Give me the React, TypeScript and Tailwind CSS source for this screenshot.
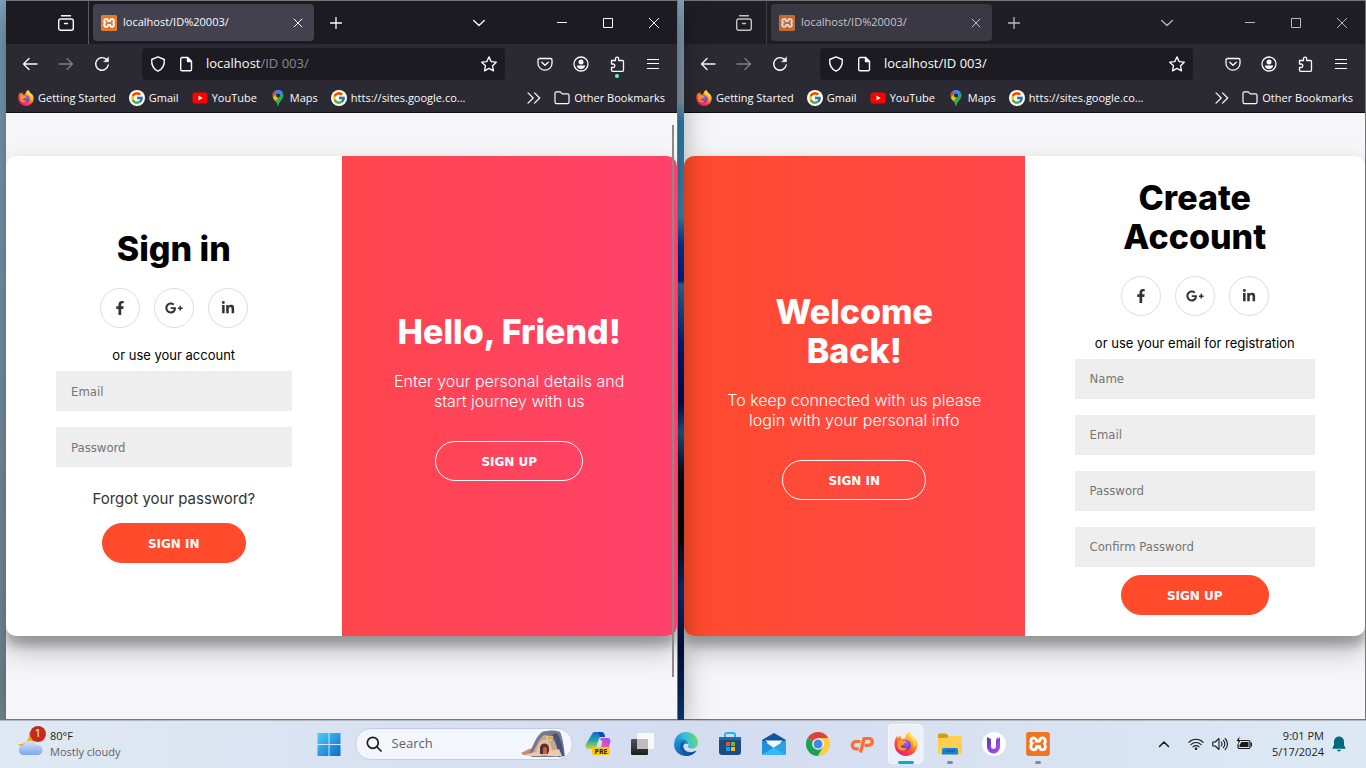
import type { ReactNode } from 'react'
import clsx from 'clsx'
import { FaFacebookF, FaGooglePlusG, FaLinkedinIn } from 'react-icons/fa'
import { FcGoogle } from 'react-icons/fc'
import { SiXampp } from 'react-icons/si'

type IconProps = { className?: string }

const line = { fill: 'none', stroke: 'currentColor', strokeLinecap: 'round', strokeLinejoin: 'round' } as const

function FirefoxIcon({ className }: IconProps) {
  return (
    <svg viewBox="0 0 24 24" className={className}>
      <defs>
        <linearGradient id="fx-body" x1="0.85" y1="0.05" x2="0.25" y2="1">
          <stop offset="0" stopColor="#fff04a" />
          <stop offset="0.35" stopColor="#ffa824" />
          <stop offset="0.65" stopColor="#ff4a3d" />
          <stop offset="1" stopColor="#e3157c" />
        </linearGradient>
        <radialGradient id="fx-globe" cx="0.55" cy="0.3" r="0.7">
          <stop offset="0" stopColor="#b25bf5" />
          <stop offset="1" stopColor="#5237b8" />
        </radialGradient>
      </defs>
      <path fill="url(#fx-body)" d="M22.6 8.7c-.6-1.4-1.7-2.8-2.6-3.3.5 1 .9 2 1 3-1.3-3.3-3.6-4.6-5.4-7.5L14.9 0c-2.7 1.6-3.7 4.5-3.8 6.2-1.1.1-2.1.5-3 1.1L7 6.6c-.3-1-.3-2.1 0-3.1-1.3.6-2.3 1.6-3 2.4-.6-.5-.5-2.1-.4-2.5C1.500 5.300.4 8.800.5 12.500.7 18.800 5.700 24 12 24c6.100 0 11-4.500 11.500-10.400.1-1.700-.2-3.300-.9-4.900z" />
      <circle cx="11.8" cy="13" r="5.3" fill="url(#fx-globe)" />
      <path fill="#ff9a2b" d="M4 8.200c1.800-.8 4-.6 5.300.7 1.300-.2 2.600 0 3.500.4-.2 1.200-1.600 1.500-2.600 2.100-.5.4-.3 1.200-.9 1.700-.8.6-1.900.2-2.700.8.8 2.400 4.600 2.800 6.800 1.500-1 2.700-4.900 3.900-7.600 2.300C3.200 16 2.800 11.500 4 8.200z" />
      <path fill="#ffe04a" d="M14.900 0c-1 3 .6 5.200 2.800 7.200 2.300 2.200 3 5.300 1.700 8.300 2.300-1.500 2.800-4.500 1.600-7.100-1.300-3.300-3.600-4.600-5.400-7.500z" />
    </svg>
  )
}

function XamppIcon({ className }: IconProps) {
  return (
    <span className={clsx('flex items-center justify-center rounded-[3px] bg-white', className)}>
      <SiXampp className="size-full text-[#ee7623]" />
    </span>
  )
}

function GoogleBadge() {
  return (
    <span className="flex size-4 items-center justify-center rounded-full bg-white">
      <FcGoogle className="size-3.5" />
    </span>
  )
}

function YouTubeIcon() {
  return (
    <svg viewBox="0 0 16 16" className="size-4">
      <rect x="0.5" y="2.5" width="15" height="11" rx="2.5" fill="#f00" />
      <path d="M6.500 5.600v4.800L10.600 8z" fill="#fff" />
    </svg>
  )
}

function MapsIcon() {
  return (
    <svg viewBox="0 0 16 16" className="size-4">
      <defs>
        <clipPath id="pin">
          <path d="M8 0a5.500 5.500 0 0 0-5.500 5.500c0 2 .9 3.200 2.200 4.800C6.200 12.200 7 13.500 7.500 15.500c.2.700.8.700 1 0 .5-2 1.300-3.300 2.800-5.200 1.300-1.600 2.200-2.800 2.200-4.800A5.500 5.500 0 0 0 8 0z" />
        </clipPath>
      </defs>
      <g clipPath="url(#pin)">
        <rect width="16" height="16" fill="#34a853" />
        <path d="M0 0h8L3 7 0 5z" fill="#ea4335" />
        <path d="M6 0h10v2L8 6z" fill="#1a73e8" />
        <path d="M1 10l7-8v6l-4 5z" fill="#fbbc04" />
        <path d="M6 0h8L10 6 6 5z" fill="#4285f4" />
      </g>
      <circle cx="8" cy="5.5" r="2" fill="#2b2a33" />
    </svg>
  )
}

function ChromeButton({ label, className, children }: { label: string; className?: string; children: ReactNode }) {
  return (
    <button type="button" aria-label={label} className={clsx('flex h-8 w-9 shrink-0 items-center justify-center', className)}>
      {children}
    </button>
  )
}

function TitleBar({ active }: { active: boolean }) {
  return (
    <div className={clsx('flex h-[43px] items-stretch text-[#fbfbfe]', active ? 'bg-[#1c1b22]' : 'bg-[#1f1e25]')}>
      <div className={clsx('flex w-[83px] shrink-0 justify-end border-r', active ? 'border-[#5b5a62]' : 'border-[#4a4951] opacity-75')}>
        <button type="button" aria-label="Firefox View" className="flex w-11 items-center justify-center">
          <svg viewBox="0 0 16 16" className="size-4" {...line} strokeWidth="1.4">
            <path d="M3.500 0.800h9M2.700 4h10.600a2 2 0 0 1 2 2v7.300a2 2 0 0 1-2 2H2.700a2 2 0 0 1-2-2V6a2 2 0 0 1 2-2zM6.500 8.500h3" />
          </svg>
        </button>
      </div>
      <div className={clsx('my-[3px] ml-1 flex w-[221px] items-center gap-1.5 rounded-sm px-2', active ? 'bg-[#42414d]' : 'bg-[#393843]')}>
        <XamppIcon className={clsx('size-4', !active && 'opacity-80')} />
        <span className={clsx('flex-1 text-[11px]', !active && 'text-[#c5c5ca]')}>localhost/ID%20003/</span>
        <button type="button" aria-label="Close tab" className={clsx('flex size-4 items-center justify-center', !active && 'opacity-70')}>
          <svg viewBox="0 0 10 10" className="size-2.5" {...line} strokeWidth="1">
            <path d="M1 1l8 8M9 1L1 9" />
          </svg>
        </button>
      </div>
      <div className={clsx('flex flex-1 items-center', !active && 'opacity-70')}>
        <button type="button" aria-label="New tab" className="flex h-8 w-11 items-center justify-center">
          <svg viewBox="0 0 12 12" className="size-3" {...line} strokeWidth="1.3">
            <path d="M6 0.500v11M0.500 6h11" />
          </svg>
        </button>
        <button type="button" aria-label="List all tabs" className="mr-[42px] ml-auto flex h-8 w-9 items-center justify-center">
          <svg viewBox="0 0 12 12" className="size-3" {...line} strokeWidth="1.3">
            <path d="M0.700 3.500L6 8.500l5.300-5" />
          </svg>
        </button>
        <button type="button" aria-label="Minimize" className="flex h-full w-[46px] items-center justify-center">
          <svg viewBox="0 0 10 10" className="size-2.5" fill="none" stroke="currentColor">
            <path d="M0 4.500h10" />
          </svg>
        </button>
        <button type="button" aria-label="Maximize" className="flex h-full w-[46px] items-center justify-center">
          <svg viewBox="0 0 10 10" className="size-2.5" fill="none" stroke="currentColor">
            <path d="M0.500 0.500h9v9h-9z" />
          </svg>
        </button>
        <button type="button" aria-label="Close" className="flex h-full w-[46px] items-center justify-center">
          <svg viewBox="0 0 10 10" className="size-2.5" fill="none" stroke="currentColor">
            <path d="M0 0l10 10M10 0L0 10" />
          </svg>
        </button>
      </div>
    </div>
  )
}

function Toolbar({ active }: { active: boolean }) {
  return (
    <div className="flex h-10 items-center bg-[#2b2a33] px-1.5 text-[#fbfbfe]">
      <ChromeButton label="Back">
        <svg viewBox="0 0 16 16" className="size-4" {...line} strokeWidth="1.3">
          <path d="M15 8H1.500M7 2.500L1.500 8 7 13.500" />
        </svg>
      </ChromeButton>
      <ChromeButton label="Forward" className="opacity-40">
        <svg viewBox="0 0 16 16" className="size-4" {...line} strokeWidth="1.3">
          <path d="M1 8h13.500M9 2.500L14.500 8 9 13.500" />
        </svg>
      </ChromeButton>
      <ChromeButton label="Reload">
        <svg viewBox="0 0 16 16" className="size-4" {...line} strokeWidth="1.4">
          <path d="M14.200 9A6.300 6.300 0 1 1 12.600 3.600" />
          <path d="M14.500 1.200v4.600H9.900z" fill="currentColor" strokeWidth="0.5" />
        </svg>
      </ChromeButton>
      <div className="mx-[22px] flex h-8 flex-1 items-center gap-3 rounded bg-[#1c1b22] px-2">
        <svg viewBox="0 0 16 16" className="size-4 shrink-0" {...line} strokeWidth="1.4">
          <path d="M8 0.800l6.300 2.700c.4 5.600-1.700 9.600-6.300 11.700-4.600-2.100-6.700-6.100-6.300-11.700z" />
        </svg>
        <svg viewBox="0 0 16 16" className="size-4 shrink-0" {...line} strokeWidth="1.4">
          <path d="M4 1.500h5.500l4 4v8a1.300 1.300 0 0 1-1.300 1.300H4a1.300 1.300 0 0 1-1.300-1.300V2.800A1.300 1.300 0 0 1 4 1.500z" />
          <path d="M9.500 1.500v4h4z" fill="currentColor" />
        </svg>
        <div className="flex-1 text-[13px]">
          localhost<span className={active ? 'text-[#8a8992]' : undefined}>/ID 003/</span>
        </div>
        <button type="button" aria-label="Bookmark this page">
          <svg viewBox="0 0 16 16" className="size-4" {...line} strokeWidth="1.3">
            <path d="M8 0.900l2.200 4.700 5.100.6-3.800 3.500 1 5.200L8 12.400l-4.500 2.500 1-5.200L.7 6.200l5.100-.6z" />
          </svg>
        </button>
      </div>
      <ChromeButton label="Save to Pocket">
        <svg viewBox="0 0 16 16" className="size-4" {...line} strokeWidth="1.3">
          <path d="M2.500 2.500h11a1.500 1.500 0 0 1 1.500 1.500v3.200a7 7 0 0 1-14 0V4a1.500 1.500 0 0 1 1.500-1.500zM4.800 6.200L8 9.300l3.200-3.100" />
        </svg>
      </ChromeButton>
      <ChromeButton label="Account">
        <svg viewBox="0 0 16 16" className="size-4">
          <circle cx="8" cy="8" r="7" fill="none" stroke="currentColor" strokeWidth="1.3" />
          <circle cx="8" cy="5.9" r="2.5" fill="currentColor" />
          <path d="M3.800 9.500h8.400c-.3 2.300-2 3.600-4.200 3.600s-3.900-1.300-4.200-3.600z" fill="currentColor" />
        </svg>
      </ChromeButton>
      <ChromeButton label="Extensions" className="relative">
        <svg viewBox="0 0 16 16" className="size-4" {...line} strokeWidth="1.3">
          <path d="M2.500 7V4.500h4V2.700a1.600 1.600 0 0 1 3.200 0v1.800h3.800a1 1 0 0 1 1 1v8.800a1 1 0 0 1-1 1H3.500a1 1 0 0 1-1-1v-2.800h1.600a1.700 1.700 0 0 0 0-3.500H2.500z" />
        </svg>
        {active && <span className="absolute bottom-0.5 left-4 size-1 rounded-full bg-[#54ffbd]" />}
      </ChromeButton>
      <ChromeButton label="Open menu">
        <svg viewBox="0 0 12 12" className="size-3" fill="none" stroke="currentColor">
          <path d="M0 1.500h12M0 5.500h12M0 10.500h12" />
        </svg>
      </ChromeButton>
    </div>
  )
}

const bookmarks = [
  { label: 'Getting Started', icon: <FirefoxIcon className="size-4" /> },
  { label: 'Gmail', icon: <GoogleBadge /> },
  { label: 'YouTube', icon: <YouTubeIcon /> },
  { label: 'Maps', icon: <MapsIcon /> },
  { label: 'htts://sites.google.co...', icon: <GoogleBadge /> },
]

function BookmarksBar() {
  return (
    <div className="flex h-[29px] items-center gap-[13px] border-b border-[#0c0c0d] bg-[#2b2a33] px-3 text-[11px] whitespace-nowrap text-[#fbfbfe]">
      {bookmarks.map(({ label, icon }) => (
        <a key={label} href="#" className="flex items-center gap-1">
          {icon}
          {label}
        </a>
      ))}
      <button type="button" aria-label="More bookmarks" className="ml-auto">
        <svg viewBox="0 0 14 12" className="h-3 w-3.5" {...line} strokeWidth="1.2">
          <path d="M1 0.800L6.200 6 1 11.200M7.500 0.800L12.700 6l-5.200 5.200" />
        </svg>
      </button>
      <button type="button" className="flex items-center gap-1">
        <svg viewBox="0 0 16 16" className="size-4" {...line} strokeWidth="1.2">
          <path d="M2.500 1.800h3.800l2 2h5.200a1.500 1.500 0 0 1 1.500 1.500v6.900a1.500 1.500 0 0 1-1.500 1.500h-11A1.500 1.500 0 0 1 1 12.200V3.300a1.500 1.500 0 0 1 1.500-1.500z" />
        </svg>
        Other Bookmarks
      </button>
    </div>
  )
}

const networks = [
  { label: 'Facebook', Icon: FaFacebookF, size: 'size-3.5' },
  { label: 'Google Plus', Icon: FaGooglePlusG, size: 'size-[18px]' },
  { label: 'LinkedIn', Icon: FaLinkedinIn, size: 'size-3.5' },
]

function SocialLinks() {
  return (
    <div className="my-5 flex gap-3.5">
      {networks.map(({ label, Icon, size }) => (
        <a key={label} href="#" aria-label={label} className="flex size-10 items-center justify-center rounded-full border border-[#dddddd] text-[#333]">
          <Icon className={size} />
        </a>
      ))}
    </div>
  )
}

function Field({ label, type = 'text' }: { label: string; type?: string }) {
  return (
    <input
      type={type}
      placeholder={label}
      aria-label={label}
      className="my-2 h-10 w-full bg-[#eee] px-[15px] font-['DejaVu_Sans_Condensed',sans-serif] text-[13px] placeholder:text-[#757575]"
    />
  )
}

function PillButton({ ghost, children }: { ghost?: boolean; children: ReactNode }) {
  return (
    <button
      type={ghost ? 'button' : 'submit'}
      className={clsx(
        "h-10 rounded-full border px-[45px] pt-0.5 font-['DejaVu_Sans',sans-serif] text-[12px] font-bold text-white",
        ghost ? 'border-white' : 'border-[#ff4b2b] bg-[#ff4b2b]',
      )}
    >
      {children}
    </button>
  )
}

function Heading({ children }: { children: ReactNode }) {
  return <h1 className="text-[34px] leading-[39px] font-extrabold">{children}</h1>
}

const cardClass =
  'grid min-h-[480px] w-full grid-cols-2 overflow-hidden rounded-[10px] bg-white text-center shadow-[0_14px_28px_rgba(0,0,0,0.25),0_10px_10px_rgba(0,0,0,0.22)]'

function SignInCard() {
  return (
    <div className={cardClass}>
      <form className="flex flex-col items-center justify-center px-[50px] text-black">
        <Heading>Sign in</Heading>
        <SocialLinks />
        <span className="text-[13px] leading-[15px]">or use your account</span>
        <Field label="Email" type="email" />
        <Field label="Password" type="password" />
        <a href="#" className="my-[15px] text-[15px] leading-[18px] text-[#333]">
          Forgot your password?
        </a>
        <PillButton>SIGN IN</PillButton>
      </form>
      <div className="flex flex-col items-center justify-center bg-linear-to-r from-[#ff464b] to-[#ff416c] px-10 text-white">
        <Heading>Hello, Friend!</Heading>
        <p className="mt-5 mb-[30px] text-[16px] leading-5 font-light">
          Enter your personal details and
          <br />
          start journey with us
        </p>
        <PillButton ghost>SIGN UP</PillButton>
      </div>
    </div>
  )
}

function SignUpCard() {
  return (
    <div className={cardClass}>
      <div className="flex flex-col items-center justify-center bg-linear-to-r from-[#ff4b2b] to-[#ff464b] px-10 text-white">
        <Heading>
          Welcome
          <br />
          Back!
        </Heading>
        <p className="mt-5 mb-[30px] text-[16px] leading-5 font-light">
          To keep connected with us please
          <br />
          login with your personal info
        </p>
        <PillButton ghost>SIGN IN</PillButton>
      </div>
      <form className="flex flex-col items-center justify-center px-[50px] text-black">
        <Heading>
          Create
          <br />
          Account
        </Heading>
        <SocialLinks />
        <span className="text-[13px] leading-[15px]">or use your email for registration</span>
        <Field label="Name" />
        <Field label="Email" type="email" />
        <Field label="Password" type="password" />
        <Field label="Confirm Password" type="password" />
        <PillButton>SIGN UP</PillButton>
      </form>
    </div>
  )
}

function BrowserWindow({ active = false, children }: { active?: boolean; children: ReactNode }) {
  return (
    <section
      className={clsx(
        "relative flex min-w-0 flex-col border-y border-r border-[#757575] font-['Open_Sans',sans-serif]",
        active && 'z-10 shadow-[0_8px_30px_rgba(0,0,0,0.45)]',
      )}
    >
      <TitleBar active={active} />
      <Toolbar active={active} />
      <BookmarksBar />
      <main className="relative flex flex-1 items-center overflow-hidden bg-[#f6f5f7] pb-10 font-['Inter',sans-serif]">
        {children}
        {active && <span className="absolute top-3 right-[3px] bottom-[42px] w-0.5 bg-[#8a8a8a]" />}
      </main>
    </section>
  )
}

function WeatherIcon() {
  return (
    <svg viewBox="0 0 26 24" className="h-6 w-[26px]">
      <defs>
        <linearGradient id="cloud" x1="0" y1="0" x2="0" y2="1">
          <stop offset="0" stopColor="#d7e5fb" />
          <stop offset="1" stopColor="#7ea6e8" />
        </linearGradient>
      </defs>
      <path d="M11 0c1 8-4 13-11 12 4 5 14 4 16-2 1-4-2-8-5-10z" fill="#f5a623" />
      <path d="M6 23a5 5 0 0 1-.5-10 7.500 7.500 0 0 1 13.500 0A5 5 0 0 1 20 23z" fill="url(#cloud)" />
    </svg>
  )
}

function StartIcon() {
  return (
    <svg viewBox="0 0 24 24" className="size-6">
      <defs>
        <linearGradient id="start" gradientUnits="userSpaceOnUse" x1="0" y1="0" x2="24" y2="24">
          <stop offset="0" stopColor="#4fd0fa" />
          <stop offset="1" stopColor="#0669cc" />
        </linearGradient>
      </defs>
      <path d="M0.500 1h11v11h-11zM12.500 1h11v11h-11zM0.500 13h11v11h-11zM12.500 13h11v11h-11z" fill="url(#start)" />
    </svg>
  )
}

function CaveArt() {
  return (
    <svg viewBox="0 0 46 28" className="h-7 w-[46px]">
      <path d="M1 23l8-4 5-1 3 7H3z" fill="#c98e6c" />
      <path d="M8 24c4-3 6-16 14-22 7-2 14-2 18 0 3 6 4 16 5 24l-12 1H12z" fill="#767892" />
      <path d="M11 24c4-2 6-14 13-19 6-1 11 5 13 13l1 8H12z" fill="#c9a58f" />
      <path d="M36 3c4 2 7 15 8 23l-6 1c0-9-2-17-6-22z" fill="#475077" />
      <path d="M16 25c0-9 4-15 9-15 4 0 7 6 8 15z" fill="#e2c3a2" />
      <path d="M20 24v-6a4.500 4.500 0 0 1 9 0v6z" fill="#592d3b" />
      <path d="M23 24v-5a2 2 0 0 1 4 0v5z" fill="#c5603a" />
      <path d="M26 6h7l-1 5h-5z" fill="#f2d391" />
      <path d="M27 8h6M29 5v6M31 6v4" stroke="#b27d4b" strokeWidth="0.6" />
      <path d="M29 21l10-2 3 7H27zM7 24l9-2 6 4H5z" fill="#ebcab0" />
    </svg>
  )
}

function CopilotIcon() {
  return (
    <svg viewBox="0 0 26 26" className="size-[26px]">
      <defs>
        <linearGradient id="cp-a" x1="0" y1="0" x2="0" y2="1">
          <stop offset="0" stopColor="#1665dc" />
          <stop offset="0.5" stopColor="#21a7a4" />
          <stop offset="1" stopColor="#d7cf37" />
        </linearGradient>
        <linearGradient id="cp-b" x1="0.8" y1="0" x2="0.2" y2="1">
          <stop offset="0" stopColor="#a84df0" />
          <stop offset="0.6" stopColor="#f05a9b" />
          <stop offset="1" stopColor="#ff9a4f" />
        </linearGradient>
      </defs>
      <path d="M7 3c1-2 2-2 4-2h5c2 0 3 1 3.500 3l.5 2h-3c-2 0-3 1-3.500 3l-2 6c-.5 2-1.500 3-3.500 3H4c-3 0-4-2-3-5z" fill="url(#cp-a)" />
      <path d="M16 7h6c3 0 4 2 3 5l-2.500 9c-.6 2-1.500 3-3.500 3h-7c2 0 2.500-1 3-3l2-9c.5-2-.5-3-2-3z" fill="url(#cp-b)" />
      <path d="M13 1h3c2 0 3 1 3.500 3l.5 2h-5z" fill="#1547b8" />
      <rect x="7" y="16" width="18" height="8" rx="2" fill="#ffc800" />
      <text x="16" y="22.5" textAnchor="middle" fontSize="7" fontWeight="700" fontFamily="Open Sans" fill="#222">
        PRE
      </text>
    </svg>
  )
}

function TaskViewIcon() {
  return (
    <svg viewBox="0 0 24 24" className="size-6">
      <defs>
        <linearGradient id="tv" x1="0" y1="0" x2="0" y2="1">
          <stop offset="0" stopColor="#555" />
          <stop offset="1" stopColor="#1c1c1c" />
        </linearGradient>
      </defs>
      <rect x="1" y="7" width="17" height="16" rx="1" fill="url(#tv)" />
      <rect x="7" y="1" width="17" height="16" rx="1" fill="#f8f8f8" />
      <rect x="7" y="7" width="11" height="10" fill="#bdbdbd" />
    </svg>
  )
}

function EdgeIcon() {
  return (
    <svg viewBox="0 0 24 24" className="size-6">
      <defs>
        <linearGradient id="edge-top" x1="0" y1="0.5" x2="1" y2="0.3">
          <stop offset="0" stopColor="#1d8fdb" />
          <stop offset="0.5" stopColor="#35c1d8" />
          <stop offset="1" stopColor="#6be15e" />
        </linearGradient>
        <linearGradient id="edge-low" x1="0" y1="0" x2="0.8" y2="1">
          <stop offset="0" stopColor="#1f9ade" />
          <stop offset="1" stopColor="#0c4c96" />
        </linearGradient>
      </defs>
      <path d="M.2 11C.8 4.500 6 0 12 0c7 0 12 5 12 10.500 0 3.500-2.500 6-6 6-3 0-4.500-1.200-4-2.200 1.500-2.300.5-5.300-3-5.800C6.500 8 1.500 9 .2 11z" fill="url(#edge-top)" />
      <path d="M.1 12C.5 9 4.500 6.500 9 7.300c3.500.6 5.500 3 5.200 5.200-.7-1.700-4.200-1.500-5 1.500-.8 3.500 3 7.500 8.500 6.500 2-.4 3.500-1 4.800-1.900C20.500 22 17 24 12.500 24 5 24-.3 18.500.1 12z" fill="url(#edge-low)" />
      <path d="M8.500 9.500c-3.500 3-2.500 10 3.500 14 4 .8 8-.8 10.500-4.900-5 2.500-11 2-12.800-2.600-.8-2.200-.7-3.700.3-5.200z" fill="#104f9c" opacity="0.8" />
    </svg>
  )
}

function StoreIcon() {
  return (
    <svg viewBox="0 0 24 24" className="size-6">
      <path d="M7 7V3a2 2 0 0 1 2-2h6a2 2 0 0 1 2 2v4" fill="none" stroke="#28b3ee" strokeWidth="2" />
      <path d="M1 5h22v15a3 3 0 0 1-3 3H4a3 3 0 0 1-3-3z" fill="#1b4c83" />
      <path d="M1 5h22v3H1z" fill="#1c6db3" />
      <path d="M8 10h4v4H8z" fill="#f25022" />
      <path d="M13 10h4v4h-4z" fill="#7fba00" />
      <path d="M8 15h4v4H8z" fill="#00a4ef" />
      <path d="M13 15h4v4h-4z" fill="#ffb900" />
    </svg>
  )
}

function MailIcon() {
  return (
    <svg viewBox="0 0 24 24" className="size-6">
      <path d="M0 8l12-7 12 7v3H0z" fill="#10569e" />
      <path d="M3 8.500h18L12 17z" fill="#f2f7fc" />
      <path d="M0 8l12 8-12 7z" fill="#1a93dc" />
      <path d="M24 8L0 23h24z" fill="#36b9f2" />
      <path d="M24 8v15L12 15.500z" fill="#2aa3e6" />
    </svg>
  )
}

function GoogleChromeIcon() {
  return (
    <svg viewBox="0 0 24 24" className="size-6">
      <path d="M12 12L1.600 6A12 12 0 0 1 22.400 6z" fill="#db4437" />
      <path d="M12 12L1.600 6A12 12 0 0 0 12 24l5.200-9z" fill="#1fa055" />
      <path d="M12 6h10.400A12 12 0 0 1 12 24l5.200-9z" fill="#ffcd41" />
      <circle cx="12" cy="12" r="5.8" fill="#fff" />
      <circle cx="12" cy="12" r="4.5" fill="#4285f4" />
    </svg>
  )
}

function CpanelIcon() {
  return (
    <svg viewBox="0 0 24 24" className="size-6" fill="none" stroke="#ff6c2c" strokeWidth="3.2" strokeLinejoin="round">
      <path d="M10.500 9.500H6.300a3.700 3.700 0 0 0-.6 7.400h3" />
      <path d="M10.500 20.500L14 6.500h5a3.300 3.300 0 0 1 .8 6.500l-1.300.3h-4" />
    </svg>
  )
}

function ExplorerIcon() {
  return (
    <svg viewBox="0 0 24 24" className="size-6">
      <path d="M0 3a1.500 1.500 0 0 1 1.500-1.500H8L10.500 4v3H0z" fill="#d99b0b" />
      <path d="M0 6h9l2-2h11.500A1.500 1.500 0 0 1 24 5.500v15a2 2 0 0 1-2 2H2a2 2 0 0 1-2-2z" fill="#ffd04f" />
      <path d="M4 22.500V18a2 2 0 0 1 2-2h12a2 2 0 0 1 2 2v4.500z" fill="#1583d8" />
      <path d="M7 19h10" stroke="#0a5ca8" strokeWidth="1.2" />
    </svg>
  )
}

function UIcon() {
  return (
    <svg viewBox="0 0 24 24" className="size-6">
      <defs>
        <linearGradient id="u" x1="0" y1="0" x2="1" y2="1">
          <stop offset="0" stopColor="#4a3ce0" />
          <stop offset="1" stopColor="#c04bdc" />
        </linearGradient>
      </defs>
      <circle cx="12" cy="12" r="12" fill="#fff" />
      <path d="M5 5l4 2v7.500a2.500 2.500 0 0 0 5 0V8l1.500-3 .5 2 2-2v10a6.500 6.500 0 0 1-13 0z" fill="url(#u)" />
    </svg>
  )
}

const apps: { label: string; icon: ReactNode; state?: 'active' | 'open' }[] = [
  { label: 'Copilot', icon: <CopilotIcon /> },
  { label: 'Task View', icon: <TaskViewIcon /> },
  { label: 'Microsoft Edge', icon: <EdgeIcon /> },
  { label: 'Microsoft Store', icon: <StoreIcon /> },
  { label: 'Mail', icon: <MailIcon /> },
  { label: 'Google Chrome', icon: <GoogleChromeIcon /> },
  { label: 'cPanel', icon: <CpanelIcon /> },
  { label: 'Firefox', icon: <FirefoxIcon className="size-6" />, state: 'active' },
  { label: 'File Explorer', icon: <ExplorerIcon />, state: 'open' },
  { label: 'U', icon: <UIcon /> },
  { label: 'XAMPP', icon: <XamppIcon className="size-6" />, state: 'open' },
]

function Taskbar() {
  return (
    <footer className="relative z-20 grid h-12 grid-cols-[1fr_auto_1fr] items-center border-t border-[#b4b8c2] bg-linear-to-r from-[#dfe9f3] via-[#d4dcf0] to-[#dce9f4] pb-0.5 font-['Open_Sans',sans-serif] text-[11px] text-[#1b1b1b]">
      <button type="button" className="relative flex items-center gap-1.5 pl-[18px] text-left">
        <WeatherIcon />
        <span className="absolute -top-0.5 left-[30px] flex size-4 items-center justify-center rounded-full bg-[#c42b1c] text-white">1</span>
        <span className="leading-4">
          80°F
          <br />
          <span className="text-[#5c6168]">Mostly cloudy</span>
        </span>
      </button>
      <nav className="flex items-center">
        <button type="button" aria-label="Start" className="flex h-10 w-11 items-center justify-center">
          <StartIcon />
        </button>
        <label className="mr-[3px] ml-1 flex h-8 w-[218px] items-center gap-2.5 rounded-full border border-[#c3cde2] bg-[#f3f6fc] pr-1.5 pl-2.5">
          <svg viewBox="0 0 16 16" className="size-4 shrink-0" {...line} strokeWidth="1.7">
            <circle cx="6.8" cy="6.8" r="5.5" />
            <path d="M11 11l4 4" />
          </svg>
          <input type="text" placeholder="Search" aria-label="Search" className="w-0 flex-1 text-[13px] placeholder:text-[#5c6168]" />
          <CaveArt />
        </label>
        {apps.map(({ label, icon, state }) => (
          <button key={label} type="button" aria-label={label} className="relative flex h-10 w-11 items-center justify-center">
            {state === 'active' && (
              <>
                <span className="absolute inset-y-0.5 left-1 w-[37px] rounded border border-[#dfe3f0] bg-[#e9edf8]" />
                <span className="absolute inset-y-0 left-1 w-[34px] rounded border border-white/60 bg-[#ebeff9]" />
                <span className="absolute bottom-0 left-3.5 h-[3px] w-4 rounded-full bg-[#00b3c4]" />
              </>
            )}
            {state === 'open' && <span className="absolute bottom-0 left-[19px] h-[3px] w-1.5 rounded-full bg-[#858993]" />}
            <span className="relative">{icon}</span>
          </button>
        ))}
      </nav>
      <div className="flex items-center justify-end pr-5">
        <button type="button" aria-label="Show hidden icons" className="mr-[18px]">
          <svg viewBox="0 0 12 12" className="size-3" {...line} strokeWidth="1.5">
            <path d="M1.500 8.500L6 4l4.500 4.500" />
          </svg>
        </button>
        <button type="button" aria-label="Network, volume and battery" className="mr-5 flex items-center gap-2">
          <svg viewBox="0 0 16 16" className="size-4" {...line} strokeWidth="1.1">
            <path d="M0.800 6.300a10.200 10.200 0 0 1 14.400 0M2.900 8.600a7.200 7.200 0 0 1 10.200 0M5 10.900a4.200 4.200 0 0 1 6 0" />
            <circle cx="8" cy="12.8" r="1.3" fill="currentColor" stroke="none" />
          </svg>
          <svg viewBox="0 0 16 16" className="size-4" {...line} strokeWidth="1.1">
            <path d="M0.800 6h2.400L7 2.500v11L3.200 10H0.800zM9.300 6.200a2.500 2.500 0 0 1 0 3.600M11.300 4.300a5.200 5.200 0 0 1 0 7.400M13.200 2.500a7.800 7.800 0 0 1 0 11" />
          </svg>
          <svg viewBox="0 0 16 16" className="size-4" {...line} strokeWidth="1.2">
            <path d="M5 4.500h7.500A1.500 1.500 0 0 1 14 6v5a1.500 1.500 0 0 1-1.500 1.500h-9A1.500 1.500 0 0 1 2 11V8.500M15.500 7v3" />
            <path d="M5.500 6H12.500v5h-9V9z" fill="currentColor" stroke="none" />
            <path d="M3.500 0.500L0.500 5h2L1.800 8.500 5 4H3z" fill="currentColor" stroke="none" />
          </svg>
        </button>
        <div className="mr-2 text-right leading-4">
          9:01 PM
          <br />
          5/17/2024
        </div>
        <button type="button" aria-label="Notifications">
          <svg viewBox="0 0 14 16" className="h-4 w-3.5" fill="#00697a">
            <path d="M7 0.500A5 5 0 0 0 2 5.500V9L0.500 12v.8h13V12L12 9V5.500a5 5 0 0 0-5-5zM4.800 13.800a2.300 2.300 0 0 0 4.400 0z" />
          </svg>
        </button>
      </div>
    </footer>
  )
}

export default function App() {
  return (
    <div className="flex min-h-screen flex-col">
      <div className="flex flex-1">
        <div className="w-1.5 shrink-0 bg-linear-to-b from-[#80a8c4] to-[#7c909e]" />
        <div className="grid flex-1 grid-cols-[672fr_682fr] gap-1.5 bg-[linear-gradient(to_bottom,#85a5bb_0%,#8aa0b0_14%,#2f86b8_17%,#3a90b4_30%,#0038a0_34%,#00208c_39%,#2a76a0_39.5%,#001f80_48%,#000b50_56%,#1b5f90_60%,#020818_66%,#000_74%,#0a3478_82%,#000f40_90%,#0b3c80_100%)]">
          <BrowserWindow active>
            <SignInCard />
          </BrowserWindow>
          <BrowserWindow>
            <SignUpCard />
          </BrowserWindow>
        </div>
      </div>
      <Taskbar />
    </div>
  )
}
